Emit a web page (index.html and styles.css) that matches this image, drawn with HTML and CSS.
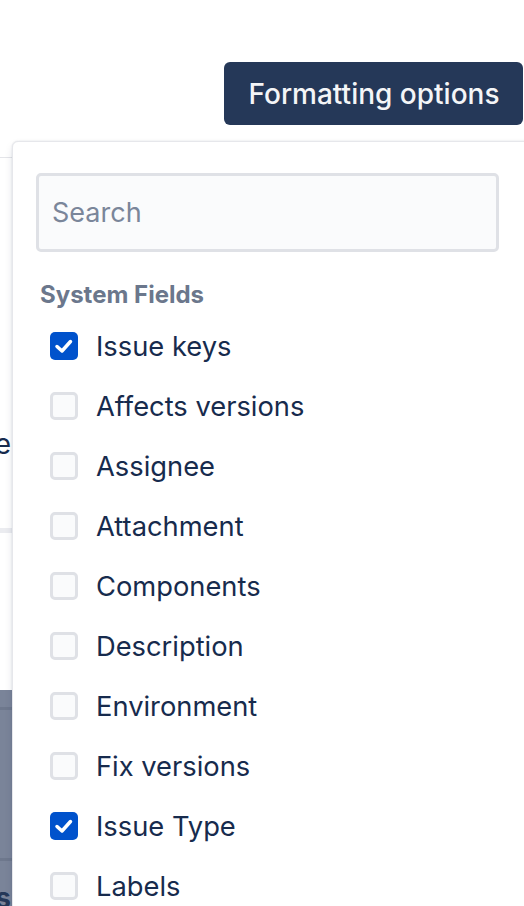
FILE: index.html
```html
<!DOCTYPE html>
<html lang="en">
<head>
<meta charset="utf-8">
<title>Formatting options</title>
<link rel="stylesheet" href="styles.css">
</head>
<body>
<div class="page">
  <div class="toolbar">
    <button class="format-btn" type="button">Formatting options</button>
  </div>

  <div class="backdrop">
    <div class="bd-rule"></div>
    <div class="bd-text"><span>Issue Type</span></div>
    <div class="bd-band"></div>
    <div class="bd-blanket">
      <div class="bd-stripe"></div>
      <div class="bd-fill"></div>
      <div class="bd-stripe"></div>
      <div class="bd-foot"><span>ss</span></div>
    </div>
  </div>

  <div class="dropdown">
    <input class="search" type="text" placeholder="Search">
    <div class="group-title">System Fields</div>
    <ul class="field-list">
      <li class="field"><span class="cb checked"><svg viewBox="0 0 28 28" width="28" height="28"><polyline points="7,14.5 12,19 20.5,9.5" /></svg></span><span class="label">Issue keys</span></li>
      <li class="field"><span class="cb"></span><span class="label">Affects versions</span></li>
      <li class="field"><span class="cb"></span><span class="label">Assignee</span></li>
      <li class="field"><span class="cb"></span><span class="label">Attachment</span></li>
      <li class="field"><span class="cb"></span><span class="label">Components</span></li>
      <li class="field"><span class="cb"></span><span class="label">Description</span></li>
      <li class="field"><span class="cb"></span><span class="label">Environment</span></li>
      <li class="field"><span class="cb"></span><span class="label">Fix versions</span></li>
      <li class="field"><span class="cb checked"><svg viewBox="0 0 28 28" width="28" height="28"><polyline points="7,14.5 12,19 20.5,9.5" /></svg></span><span class="label">Issue Type</span></li>
      <li class="field"><span class="cb"></span><span class="label">Labels</span></li>
    </ul>
  </div>
</div>
</body>
</html>
```

FILE: styles.css
```css
html, body {
  margin: 0;
  padding: 0;
  height: 906px;
  overflow: hidden;
  background: #ffffff;
}

body {
  font-family: Inter, "Noto Sans", "Liberation Sans", sans-serif;
  color: #172b4d;
}

.page {
  position: relative;
  width: 524px;
  height: 906px;
  overflow: hidden;
}

/* Toolbar */
.toolbar {
  display: flex;
  justify-content: flex-end;
  padding: 62px 1px 0 0;
}

.format-btn {
  height: 63px;
  width: 299px;
  border: none;
  border-radius: 6px;
  background: #253858;
  color: #f4f5f7;
  font-family: Inter, "Noto Sans", sans-serif;
  font-size: 28px;
  font-weight: 500;
  padding: 0 0 0 1px;
  cursor: pointer;
}

/* Page content behind the dropdown */
.backdrop {
  display: flex;
  flex-direction: column;
}

.bd-rule {
  margin-top: 32px;
  height: 1px;
  background: #e4e5e9;
}

.bd-text {
  margin-top: 266px;
  width: 11px;
  height: 40px;
  overflow: hidden;
  display: flex;
  justify-content: flex-end;
  font-size: 28px;
  line-height: 40px;
  color: #172b4d;
  white-space: nowrap;
}

.bd-band {
  margin-top: 64px;
  height: 5px;
  background: #ebecf0;
}

.bd-blanket {
  margin-top: 157px;
  height: 216px;
  overflow: hidden;
  background: #7a8499;
  display: flex;
  flex-direction: column;
}

.bd-stripe {
  flex: none;
  height: 3px;
  background: #6e788d;
  margin-top: 17px;
}

.bd-fill {
  flex: none;
  height: 131px;
}

.bd-foot {
  flex: none;
  margin-top: 17px;
  width: 11px;
  overflow: hidden;
  display: flex;
  justify-content: flex-end;
  font-size: 28px;
  font-weight: 700;
  line-height: 40px;
  color: #253858;
}

/* Dropdown panel */
.dropdown {
  position: absolute;
  top: 141px;
  left: 12px;
  width: 487px;
  height: 820px;
  padding: 31px 24px 0 23px;
  background: #ffffff;
  border: 1px solid #e6e7eb;
  border-radius: 6px;
  box-shadow: 0 4px 10px -2px rgba(9, 30, 66, 0.18), 0 0 2px rgba(9, 30, 66, 0.12);
}

.search {
  display: block;
  box-sizing: border-box;
  width: 463px;
  height: 79px;
  margin: 0;
  padding: 0 0 0 13px;
  border: 3px solid #dfe1e6;
  border-radius: 5px;
  background: #fafbfc;
  font-family: Inter, "Noto Sans", sans-serif;
  font-size: 27px;
  color: #172b4d;
  outline: none;
}

.search::placeholder {
  color: #7a869a;
}

.group-title {
  margin-top: 27px;
  padding-left: 4px;
  font-size: 24px;
  font-weight: 700;
  line-height: 32px;
  color: #6b778c;
}

.field-list {
  list-style: none;
  margin: 5px 0 0;
  padding: 0;
}

.field {
  display: flex;
  align-items: center;
  height: 60px;
  padding-left: 14px;
  gap: 18px;
}

.cb {
  box-sizing: border-box;
  width: 28px;
  height: 28px;
  flex: none;
  border: 3px solid #dfe1e6;
  border-radius: 5px;
  background: #fafbfc;
  display: flex;
  align-items: center;
  justify-content: center;
}

.cb.checked {
  border: none;
  background: #0052cc;
}

.cb svg polyline {
  fill: none;
  stroke: #ffffff;
  stroke-width: 3.5;
  stroke-linecap: round;
  stroke-linejoin: round;
}

.label {
  font-size: 27.3px;
  line-height: 36px;
  padding-top: 1px;
  color: #172b4d;
  white-space: nowrap;
}
```
